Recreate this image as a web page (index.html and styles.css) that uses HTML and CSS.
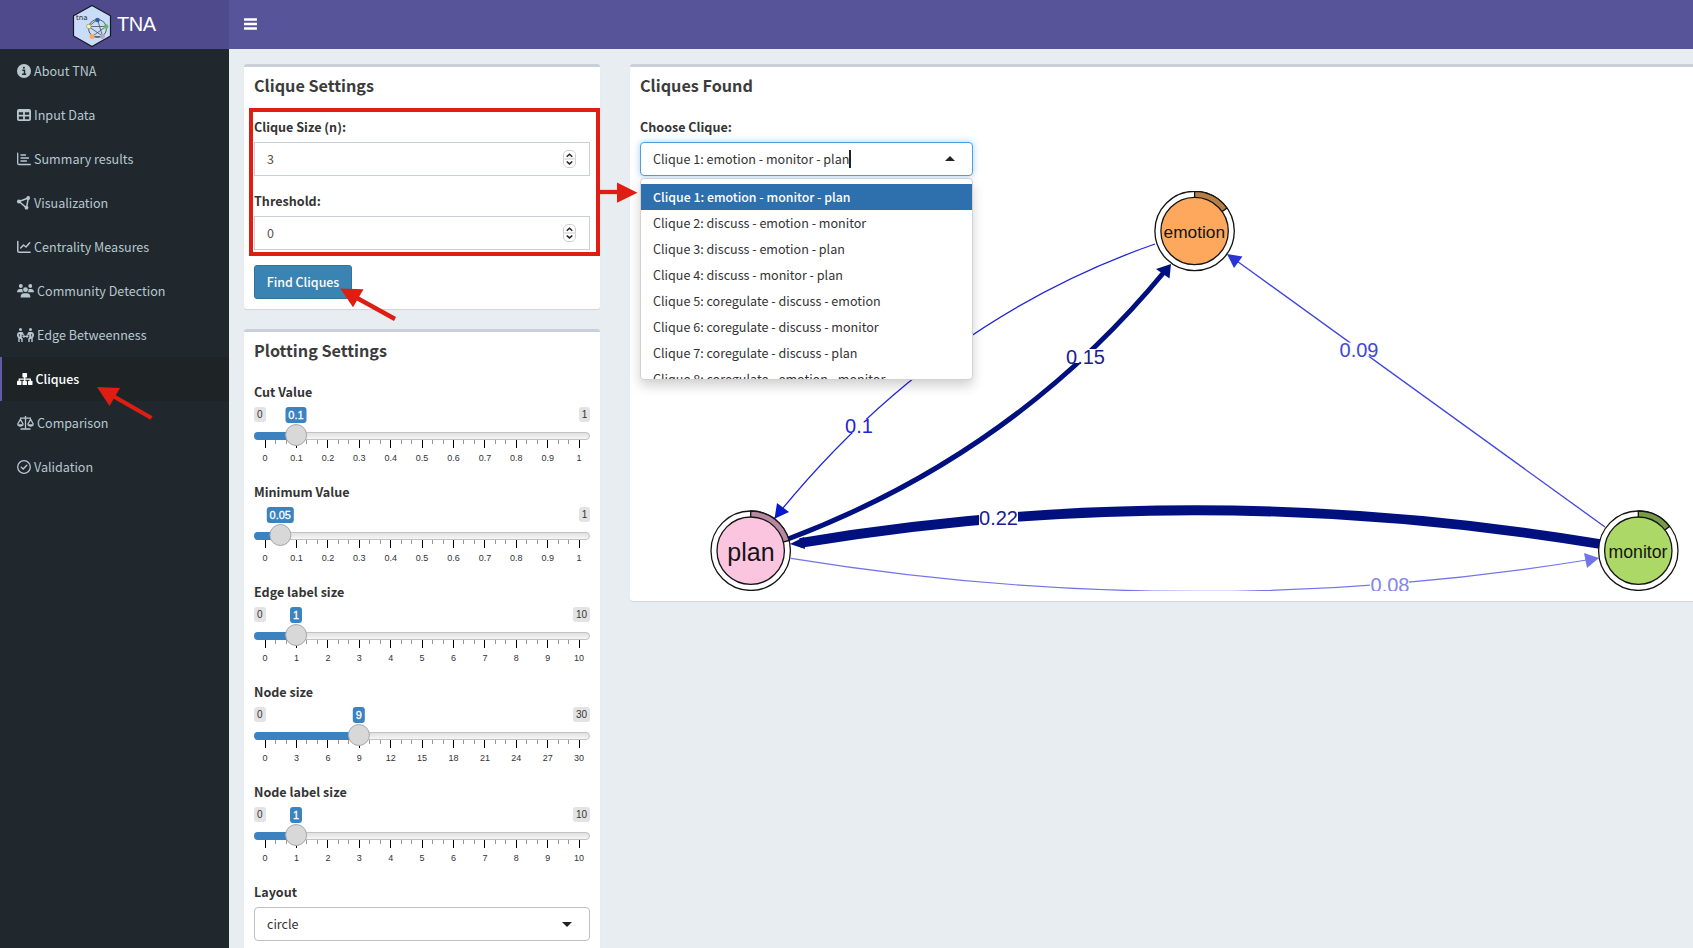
FILE: index.html
```html
<!DOCTYPE html>
<html lang="en">
<head>
<meta charset="utf-8">
<title>TNA</title>
<link rel="stylesheet" href="styles.css">
</head>
<body>
<div class="app">
  <header class="topbar">
    <div class="brand">
      <svg class="brand-logo" width="40" height="44" viewBox="0 0 40 44">
        <path d="M20 1.5 38.5 11.8V32L20 42.500 1.500 32V11.800Z" fill="#c9dcf8" stroke="#141821" stroke-width="1.200"/>
        <circle cx="25.500" cy="24.500" r="9" fill="none" stroke="#4a4f55" stroke-width="0.900"/>
        <path d="M25.500 15.500 30.500 32M16.500 22.500H34M16.500 22.500 30.500 32M20 32.500H30.500M25.500 15.500 16.500 22.500M34 22.500 20 32.500" stroke="#4a4f55" stroke-width="0.800" fill="none"/>
        <circle cx="25.500" cy="16" r="2.300" fill="#2c5fa8"/>
        <circle cx="16.800" cy="22.500" r="2.300" fill="#fbf59a" stroke="#555" stroke-width="0.400"/>
        <circle cx="34" cy="22.500" r="2.300" fill="#62b768"/>
        <circle cx="20" cy="32.500" r="2.500" fill="#fba965"/>
        <circle cx="30.500" cy="32.500" r="2.400" fill="#b5a5cf"/>
        <text x="4" y="16" font-family="DejaVu Sans, sans-serif" font-size="7" fill="#1b2430">tna</text>
      </svg>
      <span class="brand-name">TNA</span>
    </div>
    <div class="navbar">
      <svg width="13" height="12" viewBox="0 0 13 12"><path d="M.5 1.500h12M.5 6h12M.5 10.500h12" stroke="#fff" stroke-width="2.600" stroke-linecap="round"/></svg>
    </div>
  </header>
  <div class="body">
    <nav class="sidebar">
      <a class="item"><svg width="14" height="14" viewBox="0 0 14 14"><circle cx="7" cy="7" r="7" fill="currentColor"/><path d="M5.300 6.200h2.200v4M5.100 10.200h4" fill="none" stroke="#20282e" stroke-width="1.400"/><circle cx="6.900" cy="3.800" r="1" fill="#20282e"/></svg>About TNA</a>
      <a class="item"><svg width="14" height="14" viewBox="0 0 14 14"><path fill="currentColor" fill-rule="evenodd" d="M2 1h10a2 2 0 0 1 2 2v8a2 2 0 0 1-2 2H2a2 2 0 0 1-2-2V3a2 2 0 0 1 2-2ZM1.800 4.300v2.400h4.300V4.300ZM7.900 4.300v2.400h4.300V4.300ZM1.800 8.500v2.700h4.300V8.500ZM7.900 8.500v2.700h4.300V8.500Z"/></svg>Input Data</a>
      <a class="item"><svg width="14" height="14" viewBox="0 0 14 14"><path fill="none" stroke="currentColor" stroke-width="1.300" stroke-linecap="round" d="M.7 1.200v10a1.300 1.300 0 0 0 1.300 1.300h11.300M4 3h4.500M4 6h7.500M4 9h5.500"/></svg>Summary results</a>
      <a class="item"><svg width="14" height="14" viewBox="0 0 14 14"><path fill="none" stroke="currentColor" stroke-width="1.500" d="M2 5.500 11.300 2 9.500 11.800 2 5.500"/><circle cx="1.900" cy="5.500" r="1.900" fill="currentColor"/><circle cx="11.200" cy="2" r="1.900" fill="currentColor"/><circle cx="9.500" cy="11.700" r="1.900" fill="currentColor"/></svg>Visualization</a>
      <a class="item"><svg width="14" height="14" viewBox="0 0 14 14"><path fill="none" stroke="currentColor" stroke-width="1.500" stroke-linecap="round" stroke-linejoin="round" d="M.8 1.500v9.500a1.300 1.300 0 0 0 1.300 1.300h11M3.700 8 6.500 5 9 7l3.700-4.300"/></svg>Centrality Measures</a>
      <a class="item"><svg width="17" height="14" viewBox="0 0 17 14"><g fill="currentColor"><circle cx="3.800" cy="2" r="1.900"/><circle cx="13.300" cy="2" r="1.900"/><circle cx="8.500" cy="5.700" r="2.400"/><path d="M0 8.300C0 6 1.300 4.900 3 4.900h1.500c.4 0 .8.100 1 .2-.3 1.400.2 2.600 1 3.200ZM17 8.300c0-2.300-1.300-3.400-3-3.400h-1.500c-.4 0-.8.100-1 .2.300 1.400-.2 2.600-1 3.200ZM3.600 13.400C3.600 10.600 5 9.200 7 9.200h3c2 0 3.400 1.400 3.400 4.200Z"/></g></svg>Community Detection</a>
      <a class="item"><svg width="17" height="14" viewBox="0 0 17 14"><g fill="currentColor"><circle cx="3.500" cy="1.500" r="1.500"/><circle cx="13.500" cy="1.500" r="1.500"/><path d="M2.700 4h1.900c.9 0 1.500.5 1.700 1.300l.6 1.700-1.200.6-.9-1.400v3.600l.9.700V14H4.300v-2.600L2.700 10.600V14H1.300v-4C.4 9.200 0 8 0 6.800 0 5.200 1.200 4 2.700 4ZM14.300 4h-1.900c-.9 0-1.500.5-1.700 1.300L10.100 7l1.200.6.9-1.400v3.600l-.9.700V14h1.400v-2.600l1.600-.8V14h1.400v-4c.9-.8 1.300-2 1.300-3.200C17 5.200 15.800 4 14.300 4Z"/><path d="M5.200 8.400 7.400 6.600v1.200h2.200V6.600l2.200 1.800-2.200 1.800V9H7.400v1.200Z"/></g><path d="M2.400 6v2.500M14.600 6v2.500" stroke="#20282e" stroke-width=".8"/></svg>Edge Betweenness</a>
      <a class="item active"><svg width="15.500" height="14" viewBox="0 0 16 14"><g fill="currentColor"><rect x="5.600" y=".8" width="4.800" height="4.600" rx=".9"/><rect x="0" y="8.800" width="4.600" height="4.400" rx=".9"/><rect x="5.700" y="8.800" width="4.600" height="4.400" rx=".9"/><rect x="11.400" y="8.800" width="4.600" height="4.400" rx=".9"/></g><path d="M8 5v5M2.300 9V7.200h11.400V9" fill="none" stroke="currentColor" stroke-width="1.300"/></svg>Cliques</a>
      <a class="item"><svg width="17" height="14" viewBox="0 0 17 14"><path d="M3 2.200h11M8.500 0v12.800M3.500 13h10M.6 8.300 3.400 3.400 6.200 8.300M10.800 8.300l2.800-4.900 2.800 4.900" fill="none" stroke="currentColor" stroke-width="1.300"/><path d="M0 8.200h6.800c-.2 1.600-1.600 2.500-3.400 2.500S.2 9.800 0 8.200ZM10.200 8.200H17c-.2 1.600-1.600 2.500-3.400 2.500s-3.200-.9-3.400-2.500Z" fill="currentColor"/></svg>Comparison</a>
      <a class="item"><svg width="14" height="14" viewBox="0 0 14 14"><circle cx="7" cy="7" r="6.300" fill="none" stroke="currentColor" stroke-width="1.300"/><path d="M4.300 7.200 6.200 9l3.600-3.800" fill="none" stroke="currentColor" stroke-width="1.400" stroke-linecap="round"/></svg>Validation</a>
    </nav>
    <main class="content">
      <div class="settings">
        <section class="box">
          <h4 class="box-title">Clique Settings</h4>
          <label class="label">Clique Size (n):</label>
          <div class="number">3<svg class="spin" width="13" height="18" viewBox="0 0 13 18"><rect x=".5" y=".5" width="12" height="17" rx="4.500" fill="#fff" stroke="#d0d0d0"/><path d="M0 9h13" stroke="#dcdcdc" stroke-width="1.500"/><path d="M3.700 6.700 6.500 4.300l2.800 2.400M3.700 11.500l2.800 2.400 2.800-2.400" fill="none" stroke="#222" stroke-width="1.500"/></svg></div>
          <label class="label">Threshold:</label>
          <div class="number">0<svg class="spin" width="13" height="18" viewBox="0 0 13 18"><rect x=".5" y=".5" width="12" height="17" rx="4.500" fill="#fff" stroke="#d0d0d0"/><path d="M0 9h13" stroke="#dcdcdc" stroke-width="1.500"/><path d="M3.700 6.700 6.500 4.300l2.800 2.400M3.700 11.500l2.800 2.400 2.800-2.400" fill="none" stroke="#222" stroke-width="1.500"/></svg></div>
          <button class="button">Find Cliques</button>
        </section>
        <section class="box">
          <h4 class="box-title">Plotting Settings</h4>
          <label class="label">Cut Value</label>
          <div class="slider" data-max="1" data-value="0.1"></div>
          <label class="label">Minimum Value</label>
          <div class="slider" data-max="1" data-value="0.05"></div>
          <label class="label">Edge label size</label>
          <div class="slider" data-max="10" data-value="1"></div>
          <label class="label">Node size</label>
          <div class="slider" data-max="30" data-value="9"></div>
          <label class="label">Node label size</label>
          <div class="slider" data-max="10" data-value="1"></div>
          <label class="label">Layout</label>
          <div class="select">circle<span class="caret-down"></span></div>
        </section>
      </div>
      <section class="box found">
        <h4 class="box-title">Cliques Found</h4>
        <label class="label">Choose Clique:</label>
        <div class="picker">
          <div class="select focus"><span class="value">Clique 1: emotion - monitor - plan</span><span class="caret-up"></span></div>
          <div class="menu">
            <div class="option selected">Clique 1: emotion - monitor - plan</div>
            <div class="option">Clique 2: discuss - emotion - monitor</div>
            <div class="option">Clique 3: discuss - emotion - plan</div>
            <div class="option">Clique 4: discuss - monitor - plan</div>
            <div class="option">Clique 5: coregulate - discuss - emotion</div>
            <div class="option">Clique 6: coregulate - discuss - monitor</div>
            <div class="option">Clique 7: coregulate - discuss - plan</div>
            <div class="option">Clique 8: coregulate - emotion - monitor</div>
          </div>
        </div>
        <svg class="plot" width="1053" height="400" viewBox="640 191 1053 400">
          <g fill="none">
            <path d="M1155 244Q932 322 774 519" stroke="#2026d8" stroke-width="1.300"/>
            <path d="M788 539Q1014 454 1165 271" stroke="#00107f" stroke-width="5"/>
            <path d="M1600 544Q1195 477 800 543" stroke="#00107f" stroke-width="9.800"/>
            <path d="M791 558.300Q1195 624 1590 559.500" stroke="#7275e6" stroke-width="1.200"/>
            <path d="M1605 527 1230 256" stroke="#4045dd" stroke-width="1.300"/>
          </g>
          <path d="M774.500 518.700 777 503 789 512Z" fill="#0818cf"/>
          <path d="M1171 264 1156 269 1169.500 278.500Z" fill="#00107f"/>
          <path d="M790 544 804 537 805 549Z" fill="#00107f"/>
          <path d="M1599 558 1584 553 1587 568Z" fill="#7275e6"/>
          <path d="M1227 254 1242.500 256.500 1234 268Z" fill="#2a33d6"/>
          <g fill="#fff">
            <rect x="845" y="419" width="26" height="14"/>
            <rect x="1066" y="349" width="39" height="14"/>
            <rect x="979" y="511" width="39" height="15"/>
            <rect x="1370" y="578" width="39" height="14"/>
            <rect x="1340" y="342.500" width="39" height="14"/>
          </g>
          <g class="edge-labels">
            <text x="859" y="433" fill="#2026d8">0.1</text>
            <text x="1085.500" y="364" fill="#1a2090">0.15</text>
            <text x="998.500" y="525" fill="#1a2090">0.22</text>
            <text x="1390" y="592" fill="#8285ea">0.08</text>
            <text x="1359" y="357" fill="#4045dd">0.09</text>
          </g>
          <g stroke="#141414" stroke-width="1.300">
            <circle cx="1194.600" cy="231" r="39.700" fill="#fff"/>
            <path d="M1194.600 231V191.300A39.700 39.700 0 0 1 1227 208.100Z" fill="#b67d45"/>
            <circle cx="1194.600" cy="231" r="33.700" fill="#fda85c"/>
            <circle cx="750.700" cy="550.700" r="39.700" fill="#fff"/>
            <path d="M750.700 550.700V511A39.700 39.700 0 0 1 789.100 540.500Z" fill="#b5899f"/>
            <circle cx="750.700" cy="550.700" r="33.700" fill="#fbc5e0"/>
            <circle cx="1638.300" cy="550.700" r="39.700" fill="#fff"/>
            <path d="M1638.300 550.700V511A39.700 39.700 0 0 1 1669.600 526.300Z" fill="#779b48"/>
            <circle cx="1638.300" cy="550.700" r="33.700" fill="#acd867"/>
          </g>
          <g class="node-labels">
            <text x="1194.300" y="238" font-size="17.300">emotion</text>
            <text x="751" y="560.500" font-size="25">plan</text>
            <text x="1638" y="558" font-size="17.700">monitor</text>
          </g>
        </svg>
      </section>
    </main>
  </div>
  <svg class="notes" width="1693" height="948" viewBox="0 0 1693 948">
    <rect x="251" y="110" width="347" height="144" fill="none" stroke="#de1e12" stroke-width="4"/>
    <g stroke="#de1e12" stroke-width="4.300" fill="none"><path d="M600 192H619"/><path d="M357 298 395 319"/><path d="M113 396 151.500 418"/></g>
    <g fill="#de1e12"><path d="M637.500 192.700 617 182.500V202.700Z"/><path d="M340.300 288.500 363.500 289.300 353 307.300Z"/><path d="M97 387 120 388 109.500 406Z"/></g>
  </svg>
</div>
<script src="app.js"></script>
</body>
</html>
```
FILE: styles.css
```css
* { box-sizing: border-box; }
body {
  margin: 0;
  font: 12.57px/20px "Noto Sans CJK SC", "Noto Sans", sans-serif;
  color: #333;
}
.app { position: relative; width: 1693px; height: 948px; overflow: hidden; background: #e8edf1; display: flex; flex-direction: column; }
.topbar { display: flex; height: 49px; flex: none; }
.brand { width: 229px; background: #4e4a8c; display: flex; align-items: center; padding: 2px 0 0 72px; gap: 5px; }
.brand-name { font: 20px/44px "Liberation Sans", Arial, sans-serif; color: #fff; letter-spacing: -0.5px; padding-bottom: 4px; }
.navbar { flex: 1; background: #585499; display: flex; align-items: center; padding: 0 0 2px 15px; }
.body { display: flex; flex: 1; min-height: 0; }
.sidebar { width: 229px; background: #20282e; flex: none; }
.item { height: 44px; display: flex; align-items: center; gap: 3px; padding-left: 14px; border-left: 3px solid transparent; color: #b8c7ce; }
.item svg { flex: none; }
.item.active { background: #1e2426; border-left: 2px solid #605ca8; padding-left: 15px; color: #fff; font-size: 12.4px; font-weight: 500; }
.content { display: flex; gap: 30px; align-items: flex-start; padding: 15px 0 0 15px; flex: 1; min-width: 0; }
.settings { width: 356px; flex: none; display: flex; flex-direction: column; gap: 20px; }
.box { background: #fff; border-top: 3px solid #cacfd9; border-radius: 3px; padding: 0 10px 10px; box-shadow: 0 1px 1px rgba(0, 0, 0, .1); }
.box-title { margin: 0 0 10px; height: 40px; font-size: 16.2px; line-height: 36px; font-weight: 700; color: #3c3c3c; }
.label { display: block; font-weight: 700; margin-bottom: 5px; height: 20px; }
.number { height: 34px; border: 1px solid #c9ced8; margin-bottom: 15px; padding: 0 13px 0 12px; display: flex; align-items: center; justify-content: space-between; color: #555; }
.button { display: block; width: 98px; height: 34px; border: 1px solid #337299; border-radius: 3px; background: #3a84b4; color: #fff; font: 500 12.400px/20px "Noto Sans CJK SC", sans-serif; padding: 0; }
.slider { height: 60px; margin-bottom: 15px; }
.slider svg { display: block; }
.slider-text { font-family: "Liberation Sans", Arial, sans-serif; fill: #333; text-anchor: middle; }
.select { height: 34px; border: 1px solid #c0c0c0; border-radius: 4px; padding: 0 17px 0 12px; display: flex; align-items: center; justify-content: space-between; background: #fff; }
.caret-down { border: 5px solid transparent; border-top-color: #222; border-bottom: 0; }
.caret-up { border: 5px solid transparent; border-bottom-color: #222; border-top: 0; margin-bottom: 2px; }
.found { width: 1080px; flex: none; height: 537px; }
.picker { position: relative; width: 333px; height: 34px; margin-bottom: 15px; z-index: 2; }
.focus { border-color: #4e9fdd; box-shadow: 0 0 7px rgba(102, 175, 233, .6); }
.value { border-right: 2px solid #222; line-height: 18px; }
.menu { position: absolute; left: 0; top: 36px; width: 333px; height: 202px; overflow: hidden; background: #fff; border: 1px solid #d2d2d2; border-radius: 4px; padding-top: 5px; box-shadow: 0 6px 12px rgba(0, 0, 0, .18); }
.option { height: 26px; line-height: 26px; padding-left: 12px; }
.selected { background: #2d70ad; color: #fff; font-size: 12.35px; font-weight: 500; }
.plot { display: block; font-family: "Liberation Sans", Arial, sans-serif; text-anchor: middle; }
.edge-labels { font-size: 20px; }
.node-labels { fill: #141414; }
.notes { position: absolute; left: 0; top: 0; z-index: 5; pointer-events: none; }
```
FILE: app.js
```js
const START = 11.1;
const STEP = 31.4;

// Builds one range slider: track, handle, value badges and a labelled scale.
function sliderMarkup(max, value) {
  const x = START + (value / max) * STEP * 10;
  const valueWidth = [0, 12, 0, 21, 27][String(value).length];
  const maxWidth = max >= 10 ? 17 : 11;
  let out = '<svg width="336" height="60" viewBox="0 0 336 60"><defs><linearGradient id="track" x2="0" y2="1"><stop stop-color="#dedede"/><stop offset="1" stop-color="#f8f8f8"/></linearGradient></defs>';
  for (let i = 0; i <= 30; i++) {
    const major = i % 3 === 0;
    const tx = Math.round(START + (i * STEP) / 3 - 0.5);
    out += `<rect x="${tx}" y="33" width="1" height="${major ? 8 : 4}" fill="${major ? '#000' : '#999'}"/>`;
    if (major) {
      const label = Number(((i / 30) * max).toFixed(1));
      out += `<text class="slider-text" x="${START + (i * STEP) / 3}" y="54" font-size="9">${label}</text>`;
    }
  }
  out += '<rect x=".5" y="25.500" width="335" height="7" rx="3.500" fill="url(#track)" stroke="#c2c2c2"/>';
  out += `<path d="M4 25H${x}V33H4A4 4 0 0 1 4 25Z" fill="#3b82c1"/>`;
  if (value !== 0.05) {
    out += '<rect width="12" height="15" rx="3" fill="#e3e3e3"/><text class="slider-text" x="5.800" y="11" font-size="10">0</text>';
  }
  out += `<rect x="${336 - maxWidth}" width="${maxWidth}" height="15" rx="3" fill="#e3e3e3"/><text class="slider-text" x="${336 - maxWidth / 2}" y="11" font-size="10">${max}</text>`;
  out += `<rect x="${x - valueWidth / 2 - 0.5}" width="${valueWidth}" height="16" rx="3" fill="#3b82c1"/><text class="slider-text" x="${x - 0.5}" y="12" font-size="11" style="fill:#fff;stroke:#fff;stroke-width:.3">${value}</text>`;
  out += `<circle cx="${x - 0.4}" cy="28" r="10.500" fill="#d8d8d8" stroke="#a8a8a8"/></svg>`;
  return out;
}

document.querySelectorAll('.slider').forEach((el) => {
  el.innerHTML = sliderMarkup(Number(el.dataset.max), Number(el.dataset.value));
});
```
